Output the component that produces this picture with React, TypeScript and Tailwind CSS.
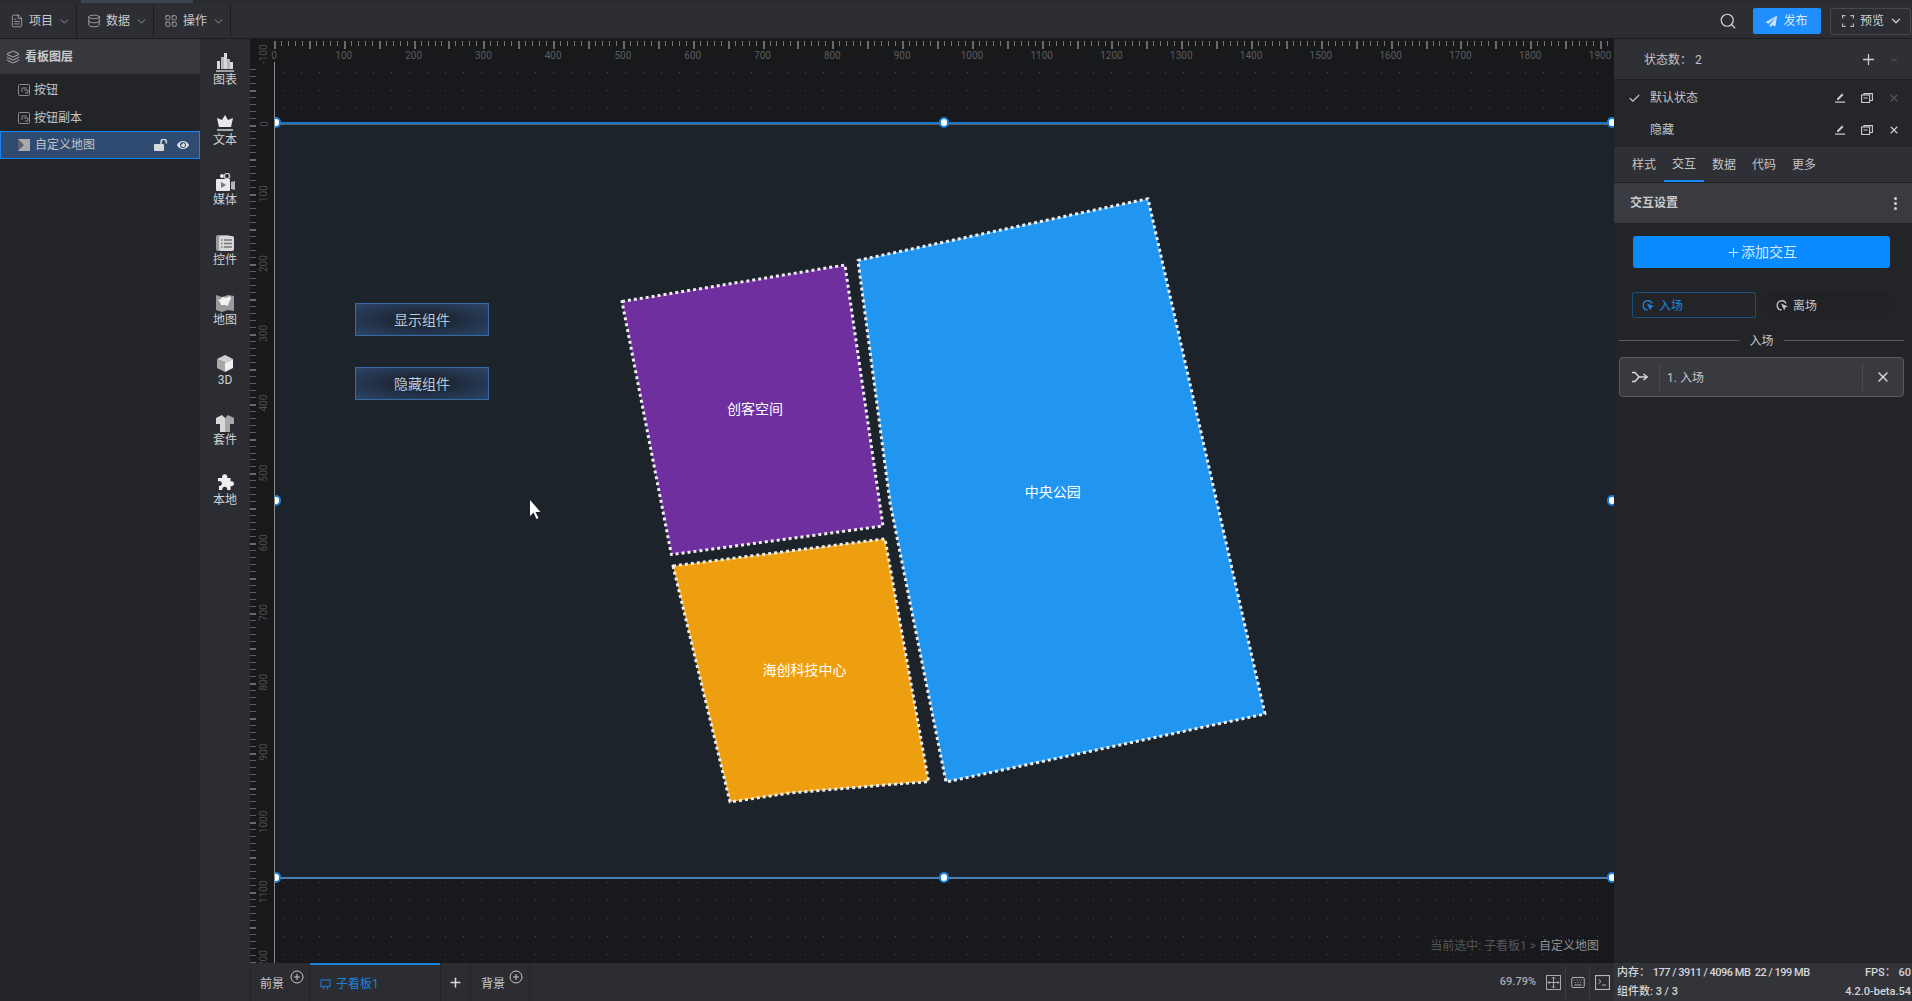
import { ChevronDown, Database, FileText, Keyboard, LayoutGrid, Layers, Plus, Search, Check, X } from "lucide-react"
import { FaEye, FaPaperPlane } from "react-icons/fa"

const scale = 0.6979
const hTicks = Array.from({ length: 194 }, (_, i) => i * 10)
const vTicks = Array.from({ length: 131 }, (_, i) => i * 10 - 100)

function TopRuler() {
  return (
    <svg width="1364" height="23" className="block">
      {hTicks.map((v) => {
        const x = 24 + v * scale
        const big = v % 50 === 0
        return (
          <rect key={v} x={Math.round(x)} y={2} width={big ? 2 : 1} height={big ? 8 : 5} fill={big ? "#6a6a6a" : "#777777"} />
        )
      })}
      {hTicks
        .filter((v) => v % 100 === 0)
        .map((v) => (
          <text key={v} x={24 + v * scale} y={20} textAnchor="middle" fontSize="10" fill="#5c5c5f">
            {v}
          </text>
        ))}
    </svg>
  )
}

// drawn from the top of the ruler row, the -100 label sits in the corner
function LeftRuler() {
  return (
    <svg width="24" height="924" className="block">
      {vTicks.map((v) => {
        const y = 85.5 + v * scale
        const big = v % 50 === 0
        if (y < 24) return null
        return <rect key={v} x={0} y={Math.round(y)} width={6} height={big ? 2 : 1} fill={big ? "#6a6a6a" : "#5c5c5c"} />
      })}
      {vTicks
        .filter((v) => v % 100 === 0)
        .map((v) => {
          const y = 85 + v * scale
          return (
            <text key={v} x={14} y={y} textAnchor="middle" fontSize="10" fill="#4f4f52" transform={`rotate(-90 14 ${y})`} dominantBaseline="central">
              {v}
            </text>
          )
        })}
    </svg>
  )
}

function MenuItem({ icon, label }: { icon: React.ReactNode; label: string }) {
  return (
    <div className="flex h-full w-[77px] items-center border-r border-[#1d1e21] pl-[10px] text-[12px] text-[#c9cacc]">
      <span className="flex w-[19px] text-[#b5b6b8]">{icon}</span>
      <span>{label}</span>
      <ChevronDown className="ml-[5px] h-[13px] w-[13px] text-[#a5a6a8]" strokeWidth={1.5} />
    </div>
  )
}

function ToolItem({ icon, label }: { icon: React.ReactNode; label: string }) {
  return (
    <div className="flex h-[60px] flex-col items-center justify-center text-[12px] leading-[14px] text-[#d0d1d3]">
      <div className="flex h-[21px] items-end">{icon}</div>
      <span className="mt-[1px]">{label}</span>
    </div>
  )
}

function ChartIcon() {
  return (
    <svg width="18" height="19" viewBox="0 0 18 19" fill="#d8d8d8">
      <rect x="1" y="8" width="3" height="8" />
      <rect x="5" y="4" width="3" height="12" fill="#b8b8b8" />
      <rect x="8" y="0" width="3" height="16" />
      <rect x="11" y="6" width="3" height="10" fill="#b8b8b8" />
      <rect x="14" y="9" width="3" height="7" />
      <rect x="0" y="17" width="18" height="2" fill="#a0a0a0" />
    </svg>
  )
}

function CrownIcon() {
  return (
    <svg width="18" height="17" viewBox="0 0 18 17" fill="#e8e8e8">
      <path d="M9 0l3 5 5-2-2 9H3L1 3l5 2z" />
      <rect x="1" y="14" width="16" height="2" fill="#a8a8a8" />
    </svg>
  )
}

function MediaIcon() {
  return (
    <svg width="19" height="19" viewBox="0 0 19 19" fill="#e8e8e8">
      <circle cx="6" cy="3" r="2" />
      <circle cx="11" cy="3" r="2.6" fill="none" stroke="#c8c8c8" strokeWidth="1.4" />
      <rect x="0" y="6" width="14" height="12" rx="1" />
      <path d="M5 9l5 3-5 3z" fill="#777" />
      <path d="M15 9l4-1v9l-4-1z" fill="#b5b5b5" />
    </svg>
  )
}

function FormIcon() {
  return (
    <svg width="18" height="17" viewBox="0 0 18 17">
      <rect x="0" y="0" width="14" height="16" rx="2" fill="#9c9c9c" />
      <rect x="3" y="1" width="15" height="15" rx="2" fill="#d8d8d8" />
      <path d="M5 5h1.5M8 5h8M5 8.5h1.5M8 8.5h8M5 12h1.5M8 12h8" stroke="#777" strokeWidth="1.3" />
    </svg>
  )
}

function MapIcon() {
  return (
    <svg width="18" height="18" viewBox="0 0 18 18">
      <path d="M0 1l6 2 6-2 6 1v15l-6-1-6 2-6-2z" fill="#9a9a9a" />
      <path d="M2 6l3-1 1-2 4 1 4-2 1 3-2 3-1 4-3-1-4 0-1-3z" fill="#f2f2f2" />
    </svg>
  )
}

function CubeIcon() {
  return (
    <svg width="16" height="17" viewBox="0 0 16 17">
      <path d="M8 0l8 4-8 4-8-4z" fill="#d0d0d0" />
      <path d="M0 4l8 4v9l-8-4z" fill="#a8a8a8" />
      <path d="M16 4l-8 4v9l8-4z" fill="#f0f0f0" />
    </svg>
  )
}

function ShirtIcon() {
  return (
    <svg width="18" height="17" viewBox="0 0 18 17">
      <path d="M6 0L0 3v6h4v8h5V3z" fill="#d8d8d8" />
      <path d="M12 0l6 3v6h-4v8H9V3z" fill="#a8a8a8" />
    </svg>
  )
}

function PuzzleIcon() {
  return (
    <svg width="18" height="18" viewBox="0 0 18 18" fill="#efefef">
      <path d="M2 4h4.2a2.7 2.7 0 1 1 5 0H14.5v3.4a2.5 2.5 0 1 1 0 4.6V16h-3.4a2.5 2.5 0 1 0-4.7 0H3v-4.2a2.4 2.4 0 1 0-1-4.2z" />
    </svg>
  )
}

function EditIcon() {
  return (
    <svg width="10" height="10" viewBox="0 0 10 10" fill="#c9cacc">
      <path d="M1 7l5-5 1.5 1.5-5 5H1z" transform="translate(1 -1.5)" />
      <rect x="0" y="8.5" width="10" height="1.2" />
    </svg>
  )
}

function CopyIcon() {
  return (
    <svg width="12" height="10" viewBox="0 0 12 10" fill="none" stroke="#c9cacc" strokeWidth="1.1">
      <rect x="0.6" y="2" width="8" height="7.5" />
      <path d="M3 2V0.6h8.4V7.5H8.6M2.5 5h4" />
    </svg>
  )
}

function OpenLockIcon() {
  return (
    <svg width="14" height="12" viewBox="0 0 14 12">
      <rect x="0" y="5" width="10" height="7" rx="1" fill="#d8d9db" />
      <path d="M7 5V3a2.6 2.6 0 0 1 5.4 0v1.5" fill="none" stroke="#d8d9db" strokeWidth="1.5" />
    </svg>
  )
}

function TriggerIcon({ color }: { color: string }) {
  return (
    <svg width="13" height="13" viewBox="0 0 13 13" fill="none">
      <path d="M5.5 11A4.6 4.6 0 1 1 10 4.5" stroke={color} strokeWidth="1.3" />
      <path d="M5 4.5l7 3-2.7 1-1 3z" fill={color} />
    </svg>
  )
}

function FitIcon() {
  return (
    <svg width="15" height="15" viewBox="0 0 15 15" fill="none" stroke="#a9aaad" strokeWidth="1">
      <rect x="0.5" y="0.5" width="14" height="14" />
      <path d="M7.5 2v11M2 7.5h11M7.5 2L6 3.5M7.5 2L9 3.5M7.5 13L6 11.5M7.5 13L9 11.5M2 7.5L3.5 6M2 7.5L3.5 9M13 7.5L11.5 6M13 7.5L11.5 9" />
    </svg>
  )
}

function TerminalIcon() {
  return (
    <svg width="15" height="15" viewBox="0 0 15 15" fill="none" stroke="#b5b6b8">
      <rect x="0.5" y="0.5" width="14" height="14" strokeWidth="1.2" />
      <path d="M3.5 4.5l2.5 2-2.5 2M7 10h4" strokeWidth="1" />
    </svg>
  )
}

function LayerButtonIcon() {
  return (
    <svg width="12" height="12" viewBox="0 0 12 12" fill="none" stroke="#8b8c8f">
      <rect x="0.5" y="0.5" width="11" height="11" rx="1" />
      <path d="M4 8V4h5M6 6h4v3H7" />
    </svg>
  )
}

function Handle({ className }: { className: string }) {
  return <div className={`absolute h-[11px] w-[10px] rounded-full border-2 border-[#1a7fd8] bg-white ${className}`} />
}

function BoardButton({ label, className }: { label: string; className: string }) {
  return (
    <div className={`absolute left-[80px] flex h-[33px] w-[134px] items-center justify-center border border-[#3a6aa5] bg-[radial-gradient(ellipse_at_center,#1d2635_25%,#2b4568_100%)] pt-[1px] text-[14px] text-[#bcc8d6] ${className}`}>
      {label}
    </div>
  )
}

export default function App() {
  return (
    <div className="flex h-[1001px] w-[1912px] flex-col overflow-hidden bg-[#232428] font-['Roboto','Noto_Sans_CJK_SC',sans-serif]">
      {/* top strip */}
      <div className="flex h-[3px] bg-[#2a2b2f]">
        <div className="ml-[81px] w-[112px] bg-[#3a4552]" />
      </div>
      {/* menu bar */}
      <div className="flex h-[36px] items-center border-b border-[#1b1c1f] bg-[#2d2e33] pt-[1px]">
        <MenuItem icon={<FileText className="h-[14px] w-[14px]" strokeWidth={1.3} />} label="项目" />
        <MenuItem icon={<Database className="h-[14px] w-[14px]" strokeWidth={1.3} />} label="数据" />
        <MenuItem icon={<LayoutGrid className="h-[14px] w-[14px]" strokeWidth={1.3} />} label="操作" />
        <Search className="ml-auto mr-[16px] h-[18px] w-[18px] text-[#d5d6d8]" strokeWidth={1.6} />
        <div className="flex h-[26px] w-[68px] items-center justify-center gap-[6px] rounded-[2px] bg-[#1f8fff] text-[12px] text-[#d6e9ff]">
          <FaPaperPlane className="h-[11px] w-[11px] text-[#c9e1fa]" />
          发布
        </div>
        <div className="ml-[9px] mr-[1px] flex h-[27px] w-[81px] items-center rounded-[3px] border border-[#47484d] pl-[11px] text-[12px] text-[#d0d1d3]">
          <svg width="12" height="12" viewBox="0 0 12 12" fill="none" stroke="#b5b6b8" strokeWidth="1.2">
            <path d="M0.6 3.5V0.6h3M8.4 0.6h3v3M11.4 8.5v2.9h-3M3.6 11.4h-3V8.5" />
          </svg>
          <span className="ml-[6px]">预览</span>
          <ChevronDown className="ml-[5px] h-[14px] w-[14px]" strokeWidth={2} />
        </div>
      </div>

      <div className="flex min-h-0 flex-1">
        {/* layer panel */}
        <div className="w-[200px] bg-[#232428] text-[12px] text-[#c3c4c6]">
          <div className="flex h-[35px] items-center gap-[5px] bg-[#37383d] pl-[6px] pt-[1px] font-bold text-[#c9cacc]">
            <Layers className="h-[14px] w-[14px]" strokeWidth={1.4} />
            看板图层
          </div>
          <div className="flex h-[30px] items-center gap-[4px] pl-[18px] pt-[2px]">
            <LayerButtonIcon />
            按钮
          </div>
          <div className="flex h-[27px] items-center gap-[4px] pl-[18px]">
            <LayerButtonIcon />
            按钮副本
          </div>
          <div className="flex h-[28px] items-center gap-[5px] border border-[#1584f0] bg-[#304b72] pl-[17px]">
            <svg width="12" height="12" viewBox="0 0 12 12"><rect width="12" height="12" fill="#a8a9ab" /><path d="M0 0l6 6-6 6z" fill="#5a6270" /></svg>
            自定义地图
            <span className="ml-auto flex"><OpenLockIcon /></span>
            <FaEye className="ml-[4px] mr-[10px] h-[12px] w-[12px] text-[#e0e1e3]" />
          </div>
        </div>

        {/* component toolbar */}
        <div className="w-[50px] bg-[#2c2d32]">
          <ToolItem icon={<ChartIcon />} label="图表" />
          <ToolItem icon={<CrownIcon />} label="文本" />
          <ToolItem icon={<MediaIcon />} label="媒体" />
          <ToolItem icon={<FormIcon />} label="控件" />
          <ToolItem icon={<MapIcon />} label="地图" />
          <ToolItem icon={<CubeIcon />} label="3D" />
          <ToolItem icon={<ShirtIcon />} label="套件" />
          <ToolItem icon={<PuzzleIcon />} label="本地" />
        </div>

        {/* editor */}
        <div className="flex w-[1364px] flex-col bg-[#18191b]">
          <div className="h-[23px]">
            <TopRuler />
          </div>
          <div className="flex h-[901px]">
            <div className="-mt-[23px] h-[924px] w-[24px] overflow-hidden">
              <LeftRuler />
            </div>
            <div className="relative w-[1340px] overflow-hidden border-l border-[#8a8b8d] bg-[#18191c] bg-[radial-gradient(circle_at_0.5px_0.5px,#4a4a4c_0.7px,transparent_0.8px)] bg-[length:18px_18px] bg-[position:8px_10px]">
              <div className="relative mt-[60px] h-[757px] border-b-2 border-t-2 border-b-[#4a7fb8] border-t-[#1a76c9] bg-[#1c232b] shadow-[inset_0_1px_0_#5f6368]">
                <BoardButton label="显示组件" className="top-[179px]" />
                <BoardButton label="隐藏组件" className="top-[243px]" />
                <svg width="1339" height="753" className="absolute left-0 top-0">
                  <g transform="translate(-275 -124)" stroke="#eeeeee" strokeWidth="3" strokeDasharray="3 3" strokeLinejoin="round">
                    <polygon points="622,301.5 845,265 883,526 671.4,554.6" fill="#6f2f9e" />
                    <polygon points="673,566 885,538.8 928.6,781.5 790,793 730,802" fill="#ee9f0f" />
                    <polygon points="858,260.4 1148,198.7 1265,714 946,782 890,502.4" fill="#2196f0" />
                    <g stroke="none" fill="#ffffff" fontSize="14" textAnchor="middle" dominantBaseline="central">
                      <text x="755" y="408.7">创客空间</text>
                      <text x="804.5" y="670">海创科技中心</text>
                      <text x="1052.7" y="491.5">中央公园</text>
                    </g>
                  </g>
                  {/* pointer */}
                  <path d="M255 376v16l3.5-3.5 3 6.5 2-1-3-6h5z" fill="#ffffff" />
                </svg>
                <Handle className="left-[-4px] top-[-7px]" />
                <Handle className="left-[664px] top-[-7px]" />
                <Handle className="right-[-3px] top-[-7px]" />
                <Handle className="left-[-4px] top-[371px]" />
                <Handle className="right-[-3px] top-[371px]" />
                <Handle className="bottom-[-6px] left-[-4px]" />
                <Handle className="bottom-[-6px] left-[664px]" />
                <Handle className="bottom-[-6px] right-[-3px]" />
              </div>
              <div className="absolute right-[15px] top-[876px] text-[12px] leading-[16px] text-[#55565a]">
                当前选中: 子看板1 &gt; <span className="text-[#8f9093]">自定义地图</span>
              </div>
            </div>
          </div>
          {/* board tabs */}
          <div className="flex h-[38px] items-stretch bg-[#2c2d32] text-[12px] text-[#c9cacc]">
            <div className="relative flex w-[60px] items-center border-l border-r border-[#232428] pl-[9px] pt-[4px]">
              前景
              <svg width="14" height="14" viewBox="0 0 14 14" className="absolute left-[39px] top-[7px]" fill="none" stroke="#c9cacc"><circle cx="7" cy="7" r="6" /><path d="M4 7h6M7 4v6" /></svg>
            </div>
            <div className="flex w-[130px] items-center gap-[5px] border-t-2 border-[#1a7fd8] pl-[10px] pt-[2px] text-[#1c82dc]">
              <svg width="11" height="11" viewBox="0 0 11 11" fill="none" stroke="#1a6db8" strokeWidth="1.3"><path d="M1 1h9v6.5H1zM3.5 7.5v3M7.5 7.5v3" /></svg>
              子看板1
            </div>
            <div className="flex w-[31px] items-center justify-center border-l border-r border-[#232428]">
              <Plus className="h-[15px] w-[15px] text-[#d8d9db]" strokeWidth={2.4} />
            </div>
            <div className="relative flex w-[59px] items-center border-r border-[#232428] pl-[10px] pt-[4px]">
              背景
              <svg width="14" height="14" viewBox="0 0 14 14" className="absolute left-[38px] top-[7px]" fill="none" stroke="#c9cacc"><circle cx="7" cy="7" r="6" /><path d="M4 7h6M7 4v6" /></svg>
            </div>
            <div className="ml-auto flex items-center">
              <span className="mr-[6px] text-[11px] font-medium text-[#a9aaad]">69.79%</span>
              <div className="flex h-[32px] w-[24px] items-center justify-center border-r border-[#3d3e43]"><FitIcon /></div>
              <div className="flex h-[32px] w-[24px] items-center justify-center border-r border-[#3d3e43]"><Keyboard className="h-[15px] w-[18px] text-[#b5b6b8]" strokeWidth={1.5} /></div>
              <div className="flex h-[32px] w-[24px] items-center justify-center"><TerminalIcon /></div>
            </div>
          </div>
        </div>

        {/* right panel */}
        <div className="flex w-[298px] flex-col bg-[#232428] text-[12px] text-[#c3c4c6]">
          <div className="flex h-[41px] items-center border-b border-[#1f2023] bg-[#2f3036] pl-[30px] pt-[1px]">
            状态数： 2
            <Plus className="ml-auto h-[17px] w-[17px] text-[#d0d1d3]" strokeWidth={1.8} />
            <ChevronDown className="ml-[12px] mr-[13px] h-[10px] w-[10px] text-[#77787b]" strokeWidth={1.5} />
          </div>
          <div className="bg-[#25262a] pb-[1px] pt-[2px]">
            <div className="flex h-[32px] items-center pl-[14px]">
              <Check className="h-[13px] w-[13px] text-[#c3c4c6]" strokeWidth={2.2} />
              <span className="ml-[9px]">默认状态</span>
              <span className="ml-auto"><EditIcon /></span>
              <span className="ml-[16px]"><CopyIcon /></span>
              <X className="ml-[15px] mr-[12px] h-[12px] w-[12px] text-[#55565a]" strokeWidth={2.2} />
            </div>
            <div className="flex h-[32px] items-center pl-[36px]">
              隐藏
              <span className="ml-auto"><EditIcon /></span>
              <span className="ml-[16px]"><CopyIcon /></span>
              <X className="ml-[15px] mr-[12px] h-[12px] w-[12px] text-[#d0d1d3]" strokeWidth={2.2} />
            </div>
          </div>
          <div className="flex h-[36px] items-stretch gap-0 border-b border-[#1f2023] bg-[#2f3036] pl-[10px]">
            <div className="flex w-[40px] items-center justify-center">样式</div>
            <div className="flex w-[40px] items-center justify-center border-b-2 border-[#1a8cff]">交互</div>
            <div className="flex w-[40px] items-center justify-center">数据</div>
            <div className="flex w-[40px] items-center justify-center">代码</div>
            <div className="flex w-[40px] items-center justify-center">更多</div>
          </div>
          <div className="flex h-[40px] items-center justify-between bg-[#3a3b41] pl-[16px] pr-[15px] font-bold text-[#c9cacc]">
            交互设置
            <div className="flex flex-col gap-[2px]">
              <span className="h-[3px] w-[3px] rounded-full bg-[#d0d1d3]" />
              <span className="h-[3px] w-[3px] rounded-full bg-[#d0d1d3]" />
              <span className="h-[3px] w-[3px] rounded-full bg-[#d0d1d3]" />
            </div>
          </div>
          <div className="ml-[19px] mr-[22px] mt-[13px] flex h-[32px] items-center justify-center rounded-[3px] bg-[#0a8aff] text-[14px] text-[#d5e9ff]">
            <Plus className="h-[15px] w-[15px]" strokeWidth={1.6} />
            添加交互
          </div>
          <div className="ml-[18px] mr-[22px] mt-[24px] flex gap-[10px]">
            <div className="flex h-[26px] w-[124px] items-center gap-[4px] rounded-[2px] border border-[#17507f] pl-[9px] pt-[1px] text-[#1c86e6]">
              <TriggerIcon color="#1c86e6" />
              入场
            </div>
            <div className="flex h-[26px] w-[124px] items-center gap-[4px] rounded-[2px] bg-[#212226] pl-[10px] pt-[1px]">
              <TriggerIcon color="#c3c4c6" />
              离场
            </div>
          </div>
          <div className="ml-[5px] mr-[8px] mt-[13px] flex h-[18px] items-center">
            <div className="h-px flex-1 bg-[#58595d]" />
            <span className="mx-[10px] pt-[1px]">入场</span>
            <div className="h-px flex-1 bg-[#58595d]" />
          </div>
          <div className="ml-[5px] mr-[8px] mt-[8px] flex h-[40px] items-center rounded-[4px] border border-[#5a5b60] bg-[#393a40] py-[5px]">
            <div className="flex h-full w-[40px] items-center justify-center border-r border-[#4a4b50]">
              <svg width="16" height="12" viewBox="0 0 16 12" fill="none" stroke="#d8d9db" strokeWidth="1.5">
                <path d="M0 1.5h3l4 4.5h8M0 10.5h3l4-4.5" />
                <path d="M11.5 3l3.5 3-3.5 3" />
              </svg>
            </div>
            <span className="ml-[7px] pt-[1px]">1. 入场</span>
            <div className="ml-auto flex h-full w-[41px] items-center justify-center border-l border-[#4a4b50]">
              <X className="h-[16px] w-[16px] text-[#d8d9db]" strokeWidth={2} />
            </div>
          </div>
          <div className="mt-auto flex h-[38px] flex-col justify-center gap-[1px] bg-[#33343a] pl-[3px] pr-[1px] text-[11px] font-medium leading-[18px] text-[#d5d6d8]">
            <div className="flex justify-between">
              <span>内存： <span className="tracking-[-0.5px]">177 / 3911 / 4096 MB&nbsp; 22 / 199 MB</span></span>
              <span>FPS： 60</span>
            </div>
            <div className="flex justify-between">
              <span>组件数: 3 / 3</span>
              <span>4.2.0-beta.54</span>
            </div>
          </div>
        </div>
      </div>
    </div>
  )
}
